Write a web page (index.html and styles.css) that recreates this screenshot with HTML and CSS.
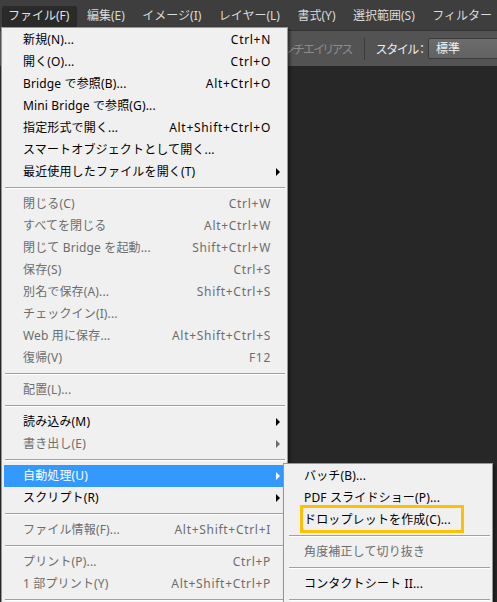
FILE: index.html
```html
<!DOCTYPE html>
<html lang="ja">
<head>
<meta charset="utf-8">
<title>Photoshop ファイルメニュー</title>
<link rel="stylesheet" href="styles.css">
</head>
<body>
<div class="app">
  <div class="menubar">
    <span class="mb-item active">ファイル(F)</span>
    <span class="mb-item">編集(E)</span>
    <span class="mb-item">イメージ(I)</span>
    <span class="mb-item">レイヤー(L)</span>
    <span class="mb-item">書式(Y)</span>
    <span class="mb-item">選択範囲(S)</span>
    <span class="mb-item">フィルター</span>
  </div>
  <div class="optbar">
    <span class="opt-dim">アンチエイリアス</span>
    <span class="opt-sep"></span>
    <span class="opt-label">スタイル：</span>
    <span class="opt-select">標準</span>
  </div>
  <div class="canvas"></div>

  <div class="menu main-menu">
    <div class="row"><span class="lbl">新規(N)...</span><span class="sc">Ctrl+N</span></div>
    <div class="row"><span class="lbl">開く(O)...</span><span class="sc">Ctrl+O</span></div>
    <div class="row"><span class="lbl">Bridge で参照(B)...</span><span class="sc">Alt+Ctrl+O</span></div>
    <div class="row"><span class="lbl">Mini Bridge で参照(G)...</span><span class="sc"></span></div>
    <div class="row"><span class="lbl">指定形式で開く...</span><span class="sc">Alt+Shift+Ctrl+O</span></div>
    <div class="row"><span class="lbl">スマートオブジェクトとして開く...</span><span class="sc"></span></div>
    <div class="row sub"><span class="lbl">最近使用したファイルを開く(T)</span><span class="sc"></span></div>
    <div class="sep"></div>
    <div class="row dis"><span class="lbl">閉じる(C)</span><span class="sc">Ctrl+W</span></div>
    <div class="row dis"><span class="lbl">すべてを閉じる</span><span class="sc">Alt+Ctrl+W</span></div>
    <div class="row dis"><span class="lbl">閉じて Bridge を起動...</span><span class="sc">Shift+Ctrl+W</span></div>
    <div class="row dis"><span class="lbl">保存(S)</span><span class="sc">Ctrl+S</span></div>
    <div class="row dis"><span class="lbl">別名で保存(A)...</span><span class="sc">Shift+Ctrl+S</span></div>
    <div class="row dis"><span class="lbl">チェックイン(I)...</span><span class="sc"></span></div>
    <div class="row dis"><span class="lbl">Web 用に保存...</span><span class="sc">Alt+Shift+Ctrl+S</span></div>
    <div class="row dis"><span class="lbl">復帰(V)</span><span class="sc">F12</span></div>
    <div class="sep"></div>
    <div class="row dis"><span class="lbl">配置(L)...</span><span class="sc"></span></div>
    <div class="sep"></div>
    <div class="row sub"><span class="lbl">読み込み(M)</span><span class="sc"></span></div>
    <div class="row sub dis"><span class="lbl">書き出し(E)</span><span class="sc"></span></div>
    <div class="sep"></div>
    <div class="row sub hl"><span class="lbl">自動処理(U)</span><span class="sc"></span></div>
    <div class="row sub"><span class="lbl">スクリプト(R)</span><span class="sc"></span></div>
    <div class="sep"></div>
    <div class="row dis"><span class="lbl">ファイル情報(F)...</span><span class="sc">Alt+Shift+Ctrl+I</span></div>
    <div class="sep"></div>
    <div class="row dis"><span class="lbl">プリント(P)...</span><span class="sc">Ctrl+P</span></div>
    <div class="row dis"><span class="lbl">1 部プリント(Y)</span><span class="sc">Alt+Shift+Ctrl+P</span></div>
    <div class="sep"></div>
  </div>

  <div class="menu sub-menu">
    <div class="row"><span class="lbl">バッチ(B)...</span></div>
    <div class="row"><span class="lbl">PDF スライドショー(P)...</span></div>
    <div class="row"><span class="lbl">ドロップレットを作成(C)...</span></div>
    <div class="sep"></div>
    <div class="row dis"><span class="lbl">角度補正して切り抜き</span></div>
    <div class="sep"></div>
    <div class="row"><span class="lbl">コンタクトシート II...</span></div>
    <div class="sep"></div>
    <div class="callout"></div>
  </div>
</div>
</body>
</html>
```

FILE: styles.css
```css
html, body {
  margin: 0;
  padding: 0;
}
body {
  width: 497px;
  height: 602px;
  overflow: hidden;
  background: #282828;
  font-family: "Noto Sans", "Noto Sans CJK JP", sans-serif;
  font-size: 12px;
}
.app {
  position: relative;
  width: 497px;
  height: 602px;
  overflow: hidden;
  display: flex;
  flex-direction: column;
}
.menubar {
  height: 31px;
  flex: none;
  background: #3e3e3e;
  border-bottom: 1px solid #333;
  box-sizing: border-box;
  display: flex;
  align-items: flex-start;
  padding-left: 2px;
  color: #dadada;
  white-space: nowrap;
}
.mb-item {
  height: 20px;
  line-height: 20px;
  margin-top: 6px;
  padding: 0 8px 0 6px;
  margin-right: 3.5px;
}
.mb-item.active {
  background: #2a2a2a;
  border-radius: 2px 2px 0 0;
  color: #e2e2e2;
  height: 21px;
}
.optbar {
  height: 35px;
  flex: none;
  background: #535353;
  display: flex;
  align-items: center;
  white-space: nowrap;
  font-feature-settings: "palt";
}
.opt-dim {
  width: 352px;
  text-align: right;
  color: #8c8c8c;
  flex: none;
  letter-spacing: -1px;
}
.opt-sep {
  width: 1px;
  height: 22px;
  background: #3a3a3a;
  margin-left: 12px;
  flex: none;
}
.opt-label {
  margin-left: 11px;
  color: #ececec;
  flex: none;
}
.opt-select {
  margin-left: 3px;
  flex: none;
  width: 100px;
  height: 21px;
  box-sizing: border-box;
  border: 1px solid #3b3b3b;
  border-radius: 2px;
  background: linear-gradient(#6c6c6c, #626262);
  color: #f2f2f2;
  line-height: 19px;
  padding-left: 7px;
}
.canvas {
  flex: 1;
  background: #272727;
}

.menu {
  position: absolute;
  background: #f0f0f0;
  border: 1px solid #979797;
  box-sizing: border-box;
  padding: 1px 2px;
  box-shadow: 2px 2px 3px rgba(0, 0, 0, 0.45);
  color: #000;
  white-space: nowrap;
}
.main-menu {
  left: 1px;
  top: 27px;
  width: 287px;
  height: 600px;
}
.sub-menu {
  left: 283px;
  top: 463px;
  width: 210px;
  height: 160px;
}
.row {
  position: relative;
  height: 22px;
  line-height: 22px;
  display: flex;
  justify-content: space-between;
  padding: 0 14px 0 19px;
}
.lbl {
  letter-spacing: 0.15px;
}
.sc {
  letter-spacing: 0.7px;
}
.sub-menu .row {
  padding-left: 18px;
}
.row.dis {
  color: #6d6d6d;
}
.row.hl {
  background: #3399ff;
  color: #fff;
}
.row.sub::after {
  content: "";
  position: absolute;
  right: 5px;
  top: 7px;
  border-left: 4px solid #000;
  border-top: 4px solid transparent;
  border-bottom: 4px solid transparent;
}
.row.sub.dis::after {
  border-left-color: #6d6d6d;
}
.row.sub.hl::after {
  border-left-color: #fff;
}
.sep {
  height: 10px;
  display: flex;
  align-items: center;
  padding: 0 0 0 1px;
}
.sep::before {
  content: "";
  flex: 1;
  height: 1px;
  background: #a0a0a0;
  border-bottom: 1px solid #fff;
}
.sub-menu .sep {
  padding-left: 3px;
}
.callout {
  position: absolute;
  left: 16px;
  top: 41px;
  width: 164px;
  height: 28px;
  box-sizing: border-box;
  border: 3px solid #ffc000;
}
```
